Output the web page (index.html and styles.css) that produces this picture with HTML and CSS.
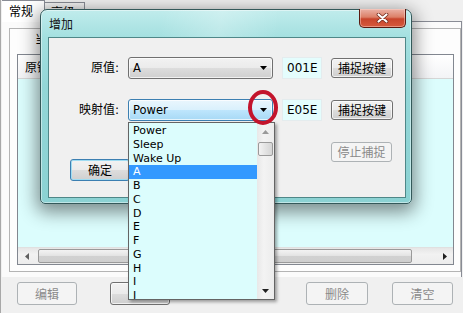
FILE: index.html
```html
<!DOCTYPE html>
<html>
<head>
<meta charset="utf-8">
<link rel="stylesheet" href="styles.css">
</head>
<body>
<div class="win">
  <div class="tabs">
    <div class="tab tab-on">常规</div>
    <div class="tab tab-off">高级</div>
  </div>
  <div class="page">
    <div class="group">
      <div class="group-cap">当前映射</div>
      <div class="list">
        <div class="list-head">
          <div class="th th1">原键</div>
          <div class="th th2"></div>
          <div class="th th3"></div>
        </div>
        <div class="list-body"></div>
        <div class="hscroll">
          <div class="sb-arrow"><svg width="4" height="7" viewBox="0 0 4 7"><path d="M4 0v7L0 3.5z" fill="#606060"/></svg></div>
          <div class="sb-thumb"></div>
          <div class="sb-fill"></div>
          <div class="sb-arrow"><svg width="4" height="7" viewBox="0 0 4 7"><path d="M0 0v7L4 3.5z" fill="#202020"/></svg></div>
        </div>
      </div>
    </div>
  </div>
  <div class="actions">
    <button class="btn btn-off a1">编辑</button>
    <button class="btn a2"></button>
    <button class="btn btn-off a3">删除</button>
    <button class="btn btn-off a4">清空</button>
  </div>
</div>

<div class="dialog">
  <div class="title">增加</div>
  <div class="close"><svg width="13" height="10" viewBox="0 0 13 10"><path d="M2.5 1.5l8 7M10.5 1.5l-8 7" stroke="#6a2416" stroke-width="3.6" stroke-linecap="round"/><path d="M2.5 1.5l8 7M10.5 1.5l-8 7" stroke="#ffffff" stroke-width="2.2" stroke-linecap="round"/></svg></div>
  <div class="client">
    <div class="lbl">原值:</div>
    <div class="combo"><span class="combo-text">A</span><span class="combo-arrow"><svg width="7" height="4" viewBox="0 0 7 4"><path d="M0 0h7L3.5 4z" fill="#000"/></svg></span></div>
    <div class="code">001E</div>
    <button class="btn btn-row">捕捉按键</button>

    <div class="lbl">映射值:</div>
    <div class="combo combo-hot"><span class="combo-text">Power</span><span class="combo-arrow"><svg width="7" height="4" viewBox="0 0 7 4"><path d="M0 0h7L3.5 4z" fill="#000"/></svg></span></div>
    <div class="code">E05E</div>
    <button class="btn btn-row">捕捉按键</button>

    <button class="btn btn-ok">确定</button>
    <button class="btn btn-off btn-stop">停止捕捉</button>
  </div>
</div>

<div class="dropdown">
  <div class="items">
    <div class="item">Power</div>
    <div class="item">Sleep</div>
    <div class="item">Wake Up</div>
    <div class="item item-sel">A</div>
    <div class="item">B</div>
    <div class="item">C</div>
    <div class="item">D</div>
    <div class="item">E</div>
    <div class="item">F</div>
    <div class="item">G</div>
    <div class="item">H</div>
    <div class="item">I</div>
    <div class="item">J</div>
  </div>
  <div class="vscroll">
    <div class="vs-arrow"><svg width="7" height="4" viewBox="0 0 7 4"><path d="M0 4h7L3.5 0z" fill="#9a9a9a"/></svg></div>
    <div class="vs-thumb"></div>
    <div class="vs-fill"></div>
    <div class="vs-arrow"><svg width="7" height="4" viewBox="0 0 7 4"><path d="M0 0h7L3.5 4z" fill="#202020"/></svg></div>
  </div>
</div>

<div class="mark"></div>
</body>
</html>
```

FILE: styles.css
```css
* { box-sizing: border-box; }
html, body {
  margin: 0;
  padding: 0;
  width: 463px;
  height: 313px;
  overflow: hidden;
  background: #f0f0f0;
  font-family: "DejaVu Sans", "Noto Sans CJK SC", sans-serif;
  font-size: 12px;
  color: #000;
}
.win {
  width: 463px;
  height: 313px;
  display: flex;
  flex-direction: column;
  border-left: 1px solid #a8a8a8;
  padding-left: 1px;
}

/* tabs */
.tabs {
  height: 21px;
  display: flex;
  align-items: flex-end;
}
.tab {
  font-family: "Noto Sans CJK SC", sans-serif;
  font-size: 12px;
}
.tab-on {
  position: relative;
  z-index: 1;
  width: 43px;
  height: 22px;
  margin-bottom: -1px;
  background: #ffffff;
  border: 1px solid #898c95;
  border-bottom: none;
  border-left: none;
  padding-left: 7px;
  line-height: 20px;
}
.tab-off {
  width: 40px;
  height: 19px;
  background: linear-gradient(#f3f3f3, #dcdcdc);
  border: 1px solid #898c95;
  border-left: none;
  border-bottom: none;
  padding-left: 6px;
  line-height: 18px;
}
.page {
  width: 460px;
  height: 256px;
  border: 1px solid #898c95;
  border-bottom: none;
  border-left: none;
  background: #fbfbfb;
  padding: 6px 0 0 7px;
}
.group {
  width: 452px;
  height: 244px;
  border: 1px solid #b4b4b4;
  background: #fdfdfd;
  padding: 0 0 0 7px;
  display: flex;
  flex-direction: column;
}
.group-cap {
  height: 25px;
  padding: 2px 0 0 18px;
  line-height: 16px;
  font-family: "Noto Sans CJK SC", sans-serif;
}
.list {
  width: 437px;
  height: 211px;
  border: 1px solid #828790;
  display: flex;
  flex-direction: column;
  background: #dcfdfd;
}
.list-head {
  height: 24px;
  display: flex;
  background: linear-gradient(#ffffff, #f3f4f6);
  border-bottom: 1px solid #d6d6d6;
}
.th {
  font-family: "Noto Sans CJK SC", sans-serif;
  line-height: 23px;
  padding-left: 7px;
  border-right: 1px solid #e3e3e3;
}
.th1 { width: 110px; }
.th2 { width: 110px; }
.th3 { flex: 1; border-right: none; }
.list-body { flex: 1; }
.hscroll {
  height: 17px;
  display: flex;
  align-items: stretch;
  background: linear-gradient(#e6e6e6, #f2f2f2 40%, #ececec);
  border-top: 1px solid #e0e0e0;
}
.sb-arrow {
  width: 17px;
  display: flex;
  align-items: center;
  justify-content: center;
}
.sb-thumb {
  width: 374px;
  margin: 1px 0 1px 3px;
  border: 1px solid #9a9a9a;
  border-radius: 2px;
  background: linear-gradient(#f3f3f3, #e3e3e3 50%, #d1d1d1 51%, #cfcfcf);
}
.sb-fill { flex: 1; }

/* bottom buttons */
.actions {
  height: 23px;
  margin-top: 5px;
  display: flex;
}
.btn {
  font-family: "Noto Sans CJK SC", sans-serif;
  font-size: 12px;
  color: #000;
  border: 1px solid #707070;
  border-radius: 3px;
  background: linear-gradient(#f2f2f2, #ebebeb 50%, #dddddd 51%, #cfcfcf);
  padding: 0;
  line-height: 1;
  box-shadow: inset 0 0 0 1px rgba(255,255,255,0.7);
}
.btn-off {
  color: #8a8a8a;
  border-color: #adb2b5;
  background: #f4f4f4;
  box-shadow: none;
}
.actions .btn { height: 23px; }
.a1 { width: 60px; margin-left: 15px; }
.a2 { width: 60px; margin-left: 33px; }
.a3 { width: 62px; margin-left: 136px; }
.a4 { width: 61px; margin-left: 24px; }

/* dialog */
.dialog {
  position: absolute;
  left: 40px;
  top: 9px;
  width: 372px;
  height: 195px;
  border: 1px solid #34595a;
  border-radius: 7px 7px 5px 5px;
  background: linear-gradient(100deg, rgba(255,255,255,0) 30%, rgba(255,255,255,0.25) 45%, rgba(255,255,255,0) 60%),
              linear-gradient(#c0ecec, #a4e0e0 14%, #93d6d7 40%, #8bd2d3);
  box-shadow: 0 5px 18px 3px rgba(0,0,0,0.45), inset 0 0 0 1px rgba(255,255,255,0.45);
  padding: 0 5px 5px 7px;
  display: flex;
  flex-direction: column;
  z-index: 5;
}
.title {
  height: 27px;
  line-height: 27px;
  padding-left: 1px;
  font-family: "Noto Sans CJK SC", sans-serif;
  font-size: 12px;
  color: #111;
}
.close {
  position: absolute;
  top: -1px;
  left: 318px;
  width: 47px;
  height: 19px;
  border: 1px solid #5a1a10;
  border-top: none;
  border-radius: 0 0 5px 5px;
  background: linear-gradient(#eab2a6, #dc8068 45%, #c8452c 55%, #d65a3c);
  box-shadow: inset 0 0 0 1px rgba(255,220,210,0.45);
  display: flex;
  align-items: center;
  justify-content: center;
}
.client {
  flex: 1;
  border: 1px solid #4f8788;
  background: #f0f0f0;
  display: grid;
  grid-template-columns: 70px 145px 40px 62px;
  grid-template-rows: 22px 22px 40px;
  column-gap: 9px;
  row-gap: 20px;
  padding-top: 19px;
  align-content: start;
}
.lbl {
  text-align: right;
  align-self: center;
  font-family: "DejaVu Sans", "Noto Sans CJK SC", sans-serif;
  font-size: 12px;
  line-height: 16px;
}
.combo {
  height: 22px;
  border: 1px solid #707070;
  border-radius: 3px;
  background: linear-gradient(#f2f2f2, #ebebeb 50%, #dddddd 51%, #cfcfcf);
  box-shadow: inset 0 0 0 1px rgba(255,255,255,0.7);
  display: flex;
  align-items: center;
  padding-left: 4px;
  font-size: 11.5px;
}
.combo-hot {
  border-color: #3c7fb1;
  background: linear-gradient(#eaf6fd, #d9f0fc 50%, #bee6fd 51%, #a7d9f5);
}
.combo-text { flex: 1; }
.combo-arrow {
  width: 17px;
  display: flex;
  justify-content: center;
  align-items: center;
}
.code {
  height: 22px;
  border: 1px solid #e4ecee;
  background: #e4fdfd;
  font-size: 12px;
  line-height: 20px;
  padding-left: 4px;
  white-space: nowrap;
  overflow: hidden;
}
.btn-row {
  height: 20px;
  align-self: center;
  width: 62px;
}
.btn-ok {
  grid-column: 1 / span 2;
  grid-row: 3;
  justify-self: start;
  align-self: start;
  width: 60px;
  height: 22px;
  margin: 18px 0 0 21px;
  border-color: #3c7fb1;
  box-shadow: inset 0 0 0 1px #9fdcf2;
}
.btn-stop {
  grid-column: 4;
  grid-row: 3;
  align-self: start;
  width: 61px;
  height: 20px;
  margin-top: 1px;
}

/* dropdown */
.dropdown {
  position: absolute;
  left: 128px;
  top: 122px;
  width: 147px;
  height: 178px;
  border: 1px solid #646464;
  background: #dcfdfd;
  box-shadow: 2px 2px 3px rgba(0,0,0,0.35);
  display: flex;
  z-index: 10;
  overflow: hidden;
}
.items {
  flex: 1;
  padding-top: 1px;
}
.item {
  height: 13.75px;
  line-height: 13.75px;
  font-size: 11px;
  padding-left: 4px;
  white-space: nowrap;
}
.item-sel {
  background: #3399ff;
  color: #fff;
}
.vscroll {
  width: 17px;
  display: flex;
  flex-direction: column;
  background: linear-gradient(90deg, #e8e8e8, #f3f3f3 40%, #ececec);
}
.vs-arrow {
  height: 17px;
  display: flex;
  align-items: center;
  justify-content: center;
}
.vs-thumb {
  height: 14px;
  margin: 2px 1px 0 1px;
  border: 1px solid #9a9a9a;
  border-radius: 2px;
  background: linear-gradient(90deg, #f3f3f3, #e3e3e3 50%, #d4d4d4);
}
.vs-fill { flex: 1; }

.mark {
  position: absolute;
  left: 248px;
  top: 90px;
  width: 30px;
  height: 35px;
  border: 4px solid #c3142c;
  border-radius: 50%;
  z-index: 20;
}
```
